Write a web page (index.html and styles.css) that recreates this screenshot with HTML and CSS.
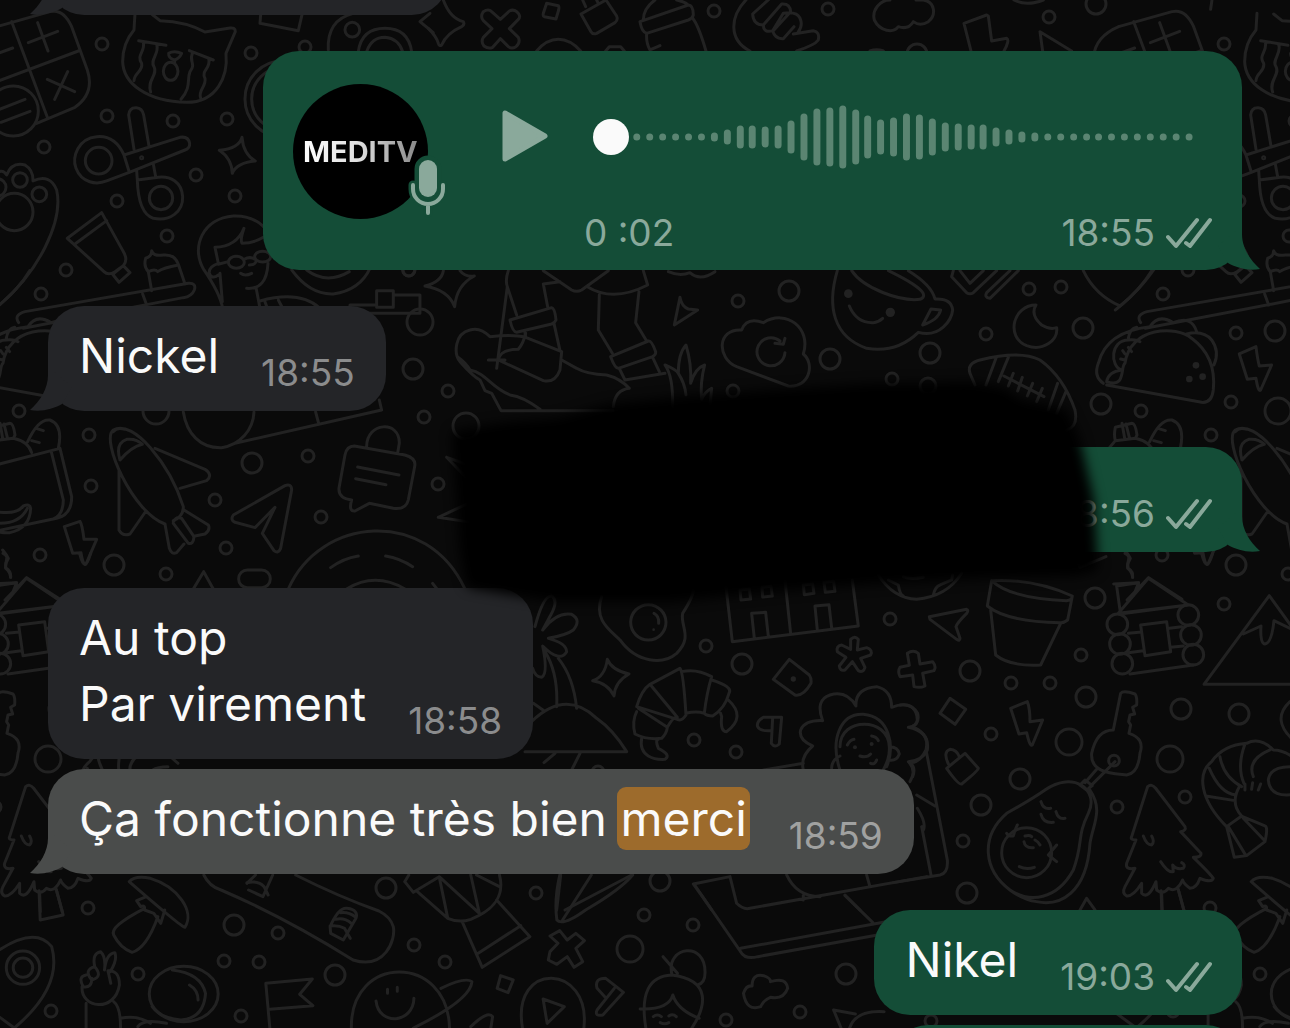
FILE: index.html
```html
<!DOCTYPE html>
<html lang="fr">
<head>
    <meta charset="UTF-8">
    <meta name="viewport" content="width=device-width, initial-scale=1.0">
    <title>Discussion</title>
    <link rel="stylesheet" href="styles.css">
</head>
<body>
    <svg class="wallpaper" viewBox="0 0 1290 1028" preserveAspectRatio="xMinYMin slice" aria-hidden="true">
        <defs>
            <g id="tile">
                <!-- dots -->
                <g id="small-dots">
                    <circle cx="102" cy="44" r="6"/><circle cx="251" cy="53" r="6"/><circle cx="305" cy="47" r="6"/><circle cx="107" cy="116" r="6"/>
                    <circle cx="173" cy="121" r="6"/><circle cx="227" cy="119" r="6"/><circle cx="44" cy="147" r="6"/><circle cx="196" cy="175" r="6"/>
                    <circle cx="117" cy="201" r="6"/><circle cx="235" cy="196" r="6"/><circle cx="167" cy="236" r="6"/><circle cx="66" cy="270" r="6"/>
                    <circle cx="41" cy="294" r="6"/><circle cx="714" cy="11" r="6"/><circle cx="828" cy="9" r="6"/><circle cx="1049" cy="17" r="6"/>
                    <circle cx="409" cy="270" r="6"/><circle cx="448" cy="391" r="6"/><circle cx="424" cy="417" r="6"/><circle cx="438" cy="484" r="6"/>
                    <circle cx="738" cy="301" r="6"/><circle cx="733" cy="391" r="6"/><circle cx="1029" cy="289" r="6"/><circle cx="1061" cy="287" r="6"/>
                    <circle cx="986" cy="334" r="6"/><circle cx="892" cy="379" r="6"/><circle cx="19" cy="411" r="6"/><circle cx="114" cy="333" r="6"/>
                    <circle cx="109" cy="402" r="6"/><circle cx="89" cy="435" r="6"/><circle cx="91" cy="486" r="6"/><circle cx="308" cy="456" r="6"/>
                    <circle cx="215" cy="500" r="6"/><circle cx="321" cy="517" r="6"/><circle cx="226" cy="548" r="6"/><circle cx="166" cy="574" r="6"/>
                    <circle cx="40" cy="555" r="6"/><circle cx="102" cy="604" r="6"/><circle cx="1081" cy="655" r="6"/><circle cx="1011" cy="683" r="6"/>
                    <circle cx="1050" cy="683" r="6"/><circle cx="991" cy="734" r="6"/><circle cx="1117" cy="807" r="6"/><circle cx="63" cy="797" r="6"/>
                    <circle cx="963" cy="841" r="6"/><circle cx="88" cy="908" r="6"/><circle cx="138" cy="974" r="6"/><circle cx="931" cy="1021" r="6"/>
                    <circle cx="706" cy="646" r="6"/><circle cx="890" cy="619" r="6"/><circle cx="694" cy="740" r="6"/><circle cx="736" cy="752" r="6"/>
                    <circle cx="598" cy="772" r="6"/><circle cx="536" cy="893" r="6"/><circle cx="278" cy="933" r="6"/><circle cx="644" cy="915" r="6"/>
                    <circle cx="693" cy="925" r="6"/><circle cx="414" cy="945" r="6"/><circle cx="445" cy="962" r="6"/><circle cx="224" cy="961" r="6"/>
                    <circle cx="259" cy="962" r="6"/><circle cx="51" cy="1011" r="6"/><circle cx="241" cy="1016" r="6"/><circle cx="800" cy="1012" r="6"/>
                    <circle cx="726" cy="1020" r="6"/>
                </g>
                <g id="big-dots">
                    <circle cx="-26" cy="4" r="10"/><circle cx="917" cy="54" r="10"/><circle cx="413" cy="369" r="10"/><circle cx="789" cy="291" r="10"/>
                    <circle cx="830" cy="359" r="10"/><circle cx="1083" cy="328" r="10"/><circle cx="930" cy="353" r="10"/><circle cx="928" cy="386" r="8"/>
                    <circle cx="1101" cy="404" r="10"/><circle cx="153" cy="331" r="10"/><circle cx="252" cy="463" r="10"/><circle cx="114" cy="565" r="10"/>
                    <circle cx="1095" cy="598" r="10"/><circle cx="970" cy="671" r="10"/><circle cx="1086" cy="697" r="10"/><circle cx="59" cy="709" r="10"/>
                    <circle cx="117" cy="714" r="10"/><circle cx="1020" cy="779" r="10"/><circle cx="981" cy="805" r="10"/><circle cx="967" cy="893" r="10"/>
                    <circle cx="742" cy="664" r="10"/><circle cx="660" cy="881" r="10"/><circle cx="234" cy="925" r="10"/><circle cx="386" cy="888" r="10"/>
                    <circle cx="335" cy="975" r="10"/><circle cx="846" cy="974" r="10"/><circle cx="420" cy="322" r="13"/><circle cx="466" cy="426" r="13"/>
                    <circle cx="156" cy="411" r="13"/><circle cx="1069" cy="742" r="13"/><circle cx="48" cy="759" r="13"/><circle cx="630" cy="949" r="13"/>
                </g>

                <!-- calculator, cat, scissors, paw, paint tube, cake, girl -->
                <g transform="scale(.3333)">
                    <path d="M-10 80 150 35Q190 25 215 80L262 210Q285 280 225 322L110 370M-10 80Q-80 110-85 170M35 65 142 352M-10 245 235 153M85 128 173 94M113 68 144 153M142 238 224 275M203 215 164 298M-20 165 38 144"/>
                    <circle cx="40" cy="333" r="75"/><path d="M-15 333 75 298M3 367 90 334"/>
                    <path d="M405 40 402 90Q368 130 368 185C370 250 440 305 560 307C650 307 685 230 678 160L706 95Q706 82 690 84L615 96Q560 65 480 62L455 42"/>
                    <path d="M416 122 498 136M568 152 640 180M430 126C437 155 408 165 425 190C430 215 403 218 402 242M470 134C480 160 448 180 462 200C475 225 440 240 452 276M578 158C565 185 590 190 570 215C560 240 575 260 543 298M626 176C635 205 602 210 615 235C620 260 593 270 602 294"/>
                    <ellipse cx="512" cy="214" rx="22" ry="27"/><path d="M506 160Q522 150 545 160Q538 175 524 180Q505 175 506 160ZM524 180V188"/>
                    <path d="M402 448 386 345Q388 322 409 323Q427 324 431 345L447 438M372 465 540 412Q565 408 569 430Q570 445 555 450L388 517ZM372 465Q345 405 290 410C235 415 215 470 228 505C245 550 290 555 320 543L388 517M410 512 412 540Q415 640 460 655C510 665 550 635 548 590C545 545 510 528 475 532L412 540M460 492 467 530"/>
                    <circle cx="296" cy="482" r="40"/><circle cx="483" cy="594" r="35"/><circle cx="425" cy="473" r="3"/>
                    <path d="M658 451Q718 445 726 412Q730 462 766 483Q710 488 697 520Q695 475 658 451Z"/>
                    <path d="M-20 530Q5 500 20 525Q35 485 75 495Q100 510 99 543Q150 520 170 570C190 660 120 820-20 930"/>
                    <circle cx="-8" cy="562" r="26"/><circle cx="60" cy="540" r="22"/><circle cx="118" cy="583" r="22"/><circle cx="43" cy="636" r="56"/>
                    <path d="M305 638 202 715 312 815Q325 828 345 815L370 797Q385 780 370 755ZM320 662 224 733M338 823 370 797 390 818 357 847Z"/>
                    <path d="M455 872 445 815Q430 800 437 775Q455 770 455 752Q460 770 490 765Q525 762 535 793L555 852M445 815Q465 805 473 815Q490 803 535 795M56 968Q40 945 75 935L565 850Q590 848 583 870Q575 890 550 893L70 985M428 882 440 915"/>
                    <path d="M668 925Q660 880 612 810C570 740 610 655 700 648C770 645 820 690 830 760M655 790 645 742Q710 740 732 685Q720 720 726 730Q760 730 790 712M660 820 667 905M655 790Q625 800 628 820Q635 840 655 825M740 865Q800 870 804 790M768 862 780 925M722 820Q735 830 755 820M748 795Q765 795 768 785M655 793 685 785M733 778Q750 768 765 778"/>
                    <ellipse cx="709" cy="787" rx="24" ry="18"/><ellipse cx="788" cy="770" rx="24" ry="16"/>
                    <path d="M780 903Q900 870 960 925M795 905 802 925M835 900 848 925"/>
                    <path d="M985 150Q980 60 1060 40M1075 155Q1085 85 1155 85Q1225 85 1235 155M1100 155Q1115 112 1155 112Q1195 115 1208 155"/><circle cx="1057" cy="89" r="22"/>
                    <path d="M780 70 895 92 907 40M782 45 780 70M1290 40 1260 65 1300 98"/>
                    <circle cx="850" cy="297" r="115"/><circle cx="850" cy="297" r="95"/>
                    <path d="M875 810Q930 885 1000 882Q1080 870 1110 805M920 810Q980 855 1048 815"/><circle cx="1226" cy="810" r="18"/>
                    <path d="M1130 872H1180V922H1130ZM1130 915H1050V940H1260V885H1180"/>
                </g>

                <!-- top row -->
                <g transform="translate(430) scale(.3333)">
                    <path d="M40 0Q60 55 100 65Q105 75 95 80Q50 100 35 135Q28 140 25 130Q20 110-5 85M160 35Q175 25 185 35L211 58 238 33Q250 27 260 35Q275 48 265 58L238 86 265 112Q272 128 258 140Q245 148 235 140L211 116 188 142Q175 148 162 138Q152 125 160 112L186 86 160 62Q150 50 160 35Z"/>
                    <path d="M350 10 385 17Q388 20 386 30L378 57 343 50Q338 48 340 40ZM458 0 467 20M500 0 505 10M453 42 528 0 560 48Q565 60 555 68L500 100Q488 104 483 95ZM320 153Q350 118 385 118Q420 118 452 153M527 153 538 140H572L583 153"/>
                    <path d="M630 65 775 15Q790 15 790 45Q788 55 775 60L650 100Q635 95 630 65ZM640 60Q640 25 675 0M740 0Q765 5 775 15M650 100Q648 130 660 150L690 137M788 55Q805 75 828 153"/>
                    <path d="M948 0C900 50 895 120 960 153M1020-5 968 42Q970 75 1000 75L1055 12Q1080 10 1082 35L1030 92Q1000 100 1000 75M1060 40Q1110 30 1114 70Q1114 85 1105 95M1060 40 1028 92Q1035 118 1060 116L1092 80M1090 102 1150 92Q1170 95 1165 120Q1155 135 1100 153"/>
                </g>
                <g transform="translate(860) scale(.3333)">
                    <path d="M90 0C60 0 35 30 43 60C60 95 100 100 115 80Q145 90 160 65Q180 80 205 65C230 45 225 5 190 0H168M30 153Q50 145 70 153M462 0Q500 20 550 0M333 153 312 70 380 45 385 48 395 123 440 115Q450 120 432 153M548 153 540 95 635 153M1052 28 1056 0"/>
                </g>

                <!-- walking shoes, grass, cloud -->
                <g transform="translate(380 260) scale(.3333)">
                    <path d="M135 78Q185 65 190 32M240 32Q255 52 283 48Q230 75 224 140Q205 90 135 78M385 32Q375 60 382 80L410 165M382 80 350 325M325 300H375M490 32 575 90Q590 98 605 90L685 32M540 65 490 72 503 140M390 180 515 143Q525 145 528 180Q525 188 515 192L410 217Q398 217 390 180ZM522 190 540 272M435 217 437 232 545 275 540 330Q525 370 490 362L355 300"/>
                    <path d="M437 232Q400 222 330 230Q300 200 270 210C225 220 220 280 240 305Q280 350 300 360L315 392 335 400 363 452H700M232 290Q260 310 270 330C320 340 330 380 390 405Q430 410 480 448M355 300Q360 268 415 268Q430 250 437 220M545 300 590 325Q620 343 680 345Q720 355 748 385Q705 390 700 440M622 80Q700 128 803 75L790 32M658 105 655 210 697 280M777 95 767 188 800 243M692 290 805 243Q815 240 827 275Q828 285 818 290L715 325Q705 325 692 290ZM718 325 735 360 855 340M818 292 838 335"/>
                    <path d="M878 440Q880 350 855 315Q890 330 895 340Q895 280 918 255Q935 310 932 370Q945 325 974 315Q960 370 965 418Q975 395 995 385L990 440M895 340Q915 370 918 405M900 112Q905 140 925 147L953 150 883 195ZM865 35Q900 50 930 38Q960 65 1005 35"/>
                    <path d="M1070 320C1010 295 1010 205 1085 210Q1100 170 1150 188C1220 145 1295 205 1270 282C1305 310 1290 385 1225 378ZM1215 278A42 42 0 1 1 1200 243M1185 250 1210 253 1215 235"/>
                    <path d="M200 592 275 670M200 592 310 630M175 772 265 730M175 772 280 788"/>
                </g>

                <!-- cup, moon, ball, taco -->
                <g transform="translate(820 260) scale(.3333)">
                    <path d="M52 32C20 140 40 230 140 265Q230 280 295 217C360 235 395 180 398 150Q395 115 345 117Q335 75 265 32M95 32C130 85 240 125 300 118Q345 100 205 32M333 147 362 150Q355 180 308 195ZM88 138Q110 190 160 188Q175 187 188 175"/>
                    <circle class="dot" cx="85" cy="101" r="13"/><circle class="dot" cx="211" cy="157" r="14"/>
                    <path d="M400 32 395 50 440 98Q450 105 460 98L530 32M420 32 450 70 490 32M570 32 500 98Q492 112 510 115L595 32M790 32Q825 105 900 138Q960 90 995 32M648 135C580 135 555 230 620 257C670 275 715 240 710 203Q690 210 665 195Q630 165 648 135Z"/>
                    <path d="M450 340Q440 310 480 300C560 280 620 280 660 300Q730 350 765 450Q775 500 740 510M465 375 450 340M528 295 498 375M565 292 535 365M552 348 672 410M580 340 565 378M607 352 593 393M638 370 622 408M667 385 650 425M713 370 685 450M738 395 710 460"/>
                    <path d="M850 370Q820 350 835 310C850 250 900 210 990 200Q1015 160 1060 188Q1115 165 1130 215M860 365C920 385 900 320 915 310C930 200 1070 195 1115 235Q1190 290 1180 390Q1175 430 1145 427L860 375M925 235Q930 205 950 202M1100 222Q1150 210 1175 240Q1200 275 1182 315M905 330C870 320 870 240 925 240Q950 238 960 245M860 365Q865 335 905 330M925 262 935 275M908 272 915 282M902 297 915 300"/>
                    <circle class="dot" cx="1128" cy="316" r="10"/><circle class="dot" cx="1108" cy="357" r="10"/><circle class="dot" cx="1148" cy="350" r="10"/>
                    <path d="M1258 282 1308 260Q1313 300 1318 318L1355 315 1322 390Q1315 398 1308 355L1282 358Z"/>
                    <path d="M915 880C940 890 915 910 925 925Q940 935 938 952M1145 880Q1160 945 1178 880M765 890 780 922 858 890"/>
                    <path d="M175 945Q220 1015 290 1018Q380 1010 425 940M205 960 235 975Q240 1005 250 1008M340 1005Q345 980 360 975L395 960 398 945M250 950Q270 960 310 952"/>
                </g>

                <!-- groceries, rocket, plane, chat bag, plate -->
                <g transform="translate(0 400) scale(.3333)">
                    <path d="M-90 215 180 145 215 290Q215 345 170 355L-20 395M153 152 190 300Q190 345 160 357M83 125Q115 55 150 60Q190 75 175 145M108 85 130 92M95 122 118 128M95 158Q85 125 40 115L45 105Q40 70 30 70L-20 82Q-25 105-20 122L40 115M0 70 8 115M12 72 22 112M-20 122-60 170M-10 335Q50 345 70 318Q90 310 92 325Q90 385 30 398Q5 400-25 390M0 370Q60 370 82 325"/>
                    <path d="M8 450Q20 465 25 475Q15 490 17 505Q30 515 32 532M193 380 240 364Q247 375 252 418L290 418 258 492Q250 500 243 458L218 460ZM15 600 80 533 180 598M-25 552 50 548 35 585"/>
                    <path d="M495 372C400 340 300 120 340 90C400 55 510 195 550 320Q550 350 520 362M340 95Q350 80 375 88M360 180Q345 130 380 118Q410 115 427 133Q395 140 360 180ZM465 145 615 208Q640 225 620 242L540 265M357 210V390Q368 410 390 402L438 333M495 372 508 445Q515 465 530 458L552 432M552 330 625 375Q632 390 615 402L585 408M520 365Q530 348 545 355L582 410Q580 435 565 430L520 370"/>
                    <path d="M700 345 855 257Q875 250 875 270L842 445Q835 462 822 452L787 400 825 322 765 383 705 367Q690 360 700 345ZM1100 140C1100 65 1200 60 1198 130L1193 160M1063 138 1215 165Q1250 175 1244 200L1225 300Q1218 330 1180 325L1108 310 1065 333Q1045 335 1055 300Q1015 295 1017 265L1035 165Q1040 138 1063 138ZM1073 201 1197 225M1067 236 1158 254"/>
                    <path d="M550 36C560 100 600 145 665 143C720 135 760 90 762 36M705 130 1145 30 1138 0M947 36 955 66"/>
                    <path d="M865 567C960 350 1280 320 1395 567M1040 567Q1125 515 1215 567M992 503Q1030 475 1075 468M1157 468Q1200 475 1238 500M1298 550 1315 572M580 567 611 515 640 567"/>
                    <rect x="716" y="510" width="95" height="53" rx="26"/><path d="M735 567H790"/>
                </g>

                <!-- egg, houses, croissant, palm island, portrait -->
                <g transform="translate(530 580) scale(.3333)">
                    <path d="M215 50C190 120 240 150 270 180C320 250 400 255 440 220C490 170 450 140 458 100Q490 50 490 30M372 100Q388 108 386 130"/><circle cx="355" cy="127" r="53"/><circle class="dot" cx="371" cy="149" r="4"/>
                    <path d="M588 20 607 185 985 138 967 0M765 0 782 160M673 175 665 100 707 97 715 168M862 150 855 78 897 74 905 143"/>
                    <path d="M630 30 658 27 662 57 633 60ZM696 22 723 19 727 48 698 51ZM820 15 848 12 852 40 823 44ZM882 7 911 4 915 34 886 37Z"/>
                    <path d="M15 140Q40 45 65 48Q85 60 65 100L38 150Q80 95 125 103Q155 120 130 150Q110 165 55 175Q110 190 110 215Q90 250 38 198Q55 280 35 292Q15 290 8 265M45 215Q85 280 80 380M85 235Q130 290 140 385M-10 440Q100 320 200 415Q250 450 290 515H-15M10 370 42 392M42 548 75 520M125 570 150 520M188 302Q225 290 232 238Q245 270 297 282Q255 305 252 348Q235 310 188 302Z"/>
                    <path d="M360 313 450 265Q460 275 468 405Q455 425 442 418L320 380Q335 330 360 313ZM360 313 442 412M455 275Q500 265 545 290Q530 340 523 400Q500 392 468 400M545 300Q610 320 597 340Q585 385 548 408Q530 408 523 400M325 385 412 442Q430 410 440 412M320 395Q305 425 315 462Q350 480 395 475Q410 460 412 442M335 475C325 530 375 540 405 538Q425 525 385 505 375 480 385 478M595 360Q650 410 590 455Q570 455 575 410L572 400"/>
                    <path d="M755 412H700Q678 425 683 440Q690 455 726 452M728 415 724 490Q735 505 748 492L755 412M778 238 730 298 795 345Q820 350 843 310Q845 295 838 285Z"/><circle class="dot" cx="790" cy="297" r="8"/>
                    <path d="M962 178Q975 165 985 178L982 210 1010 203Q1030 210 1022 225L992 235 1005 262Q1000 280 985 272L967 245 945 270Q930 275 928 258L948 232 922 215Q918 198 935 195L962 208Z"/>
                    <path d="M820 570Q810 530 848 498Q805 480 812 450Q825 420 878 422Q855 360 900 345Q950 330 978 378Q975 325 1040 320Q1085 330 1085 382Q1140 360 1163 400Q1170 430 1145 440Q1200 460 1188 510Q1170 550 1138 548Q1160 575 1140 605M930 570C900 480 930 400 1000 403C1080 410 1095 500 1070 560M930 500C930 410 1075 410 1078 500C1080 530 1070 550 1060 570M930 528Q905 540 905 565M1078 500Q1105 500 1108 522Q1100 545 1075 540M952 495Q960 480 972 478M1025 468Q1040 470 1045 482M990 528Q1010 535 1022 522M1022 550Q1035 555 1040 540M690 572 820 550"/>
                    <circle class="dot" cx="975" cy="502" r="6"/><circle class="dot" cx="1025" cy="492" r="6"/>
                    <path d="M80 990 92 885M105 990 305 885M545 990 490 912 600 890 620 970Q640 990 660 985L1190 890M770 885Q800 950 870 950M1010 885 1020 920M820 945V960M945 945 990 990"/>
                </g>

                <!-- pot, cabin, mountain, avocado, tree, shrimp, mushroom -->
                <g transform="translate(900 560) scale(.3333)">
                    <path d="M275 62Q400 55 517 108L503 180Q490 190 480 188Q320 185 262 138ZM275 62Q330 115 500 122Q517 120 517 108M272 150 287 285Q330 320 422 315L482 190M88 170 200 148Q207 150 200 160Q170 190 168 200L180 235Q180 245 170 238L90 178Z"/>
                    <path d="M655 160 745 55 865 135ZM660 150 650 78 715 68 718 82M660 162 865 135M690 342 880 315M685 220 725 216M685 278 730 272M808 205 845 200M812 262 850 258M722 195 800 185 812 275 735 287Z"/>
                    <circle cx="652" cy="193" r="31"/><circle cx="660" cy="252" r="31"/><circle cx="667" cy="311" r="31"/><circle cx="865" cy="165" r="31"/><circle cx="873" cy="225" r="31"/><circle cx="880" cy="284" r="31"/>
                    <path d="M912 373 1108 107 1300 373ZM1030 222 1083 198Q1080 250 1095 252Q1115 250 1122 182L1180 210"/>
                    <path d="M22 280Q40 268 55 280L60 312 98 305Q110 320 102 332L68 340 75 378Q60 385 42 380L38 345 0 350Q-8 335 0 322L28 316ZM150 415 197 448 165 493 120 460ZM332 445 382 425Q390 445 390 485L428 480 397 555Q390 562 380 518L357 522ZM140 625 195 580 235 625Q235 632 185 672Q175 675 140 625ZM145 612Q128 575 150 568Q170 570 177 588"/>
                    <path d="M640 510 662 400Q670 390 705 402Q712 410 710 435L698 442 704 462 690 465 686 485 692 495 687 520Q735 535 720 580Q715 640 680 645C640 640 570 640 575 580Q590 510 640 510ZM590 628 555 668M645 605 570 680M540 675 555 660 577 677 560 690Z"/><circle cx="642" cy="602" r="16"/>
                    <path d="M435 690C520 630 600 690 565 760C530 830 550 850 520 930C470 1020 390 1030 330 990C250 930 240 830 320 760Q400 715 435 690ZM570 690C610 750 580 790 570 850C560 1000 480 1040 410 1025Q370 1020 330 990M423 725Q430 750 452 745M423 763Q430 790 460 787M468 755Q475 780 495 775M320 820Q325 830 340 828 345 810 352 795M372 845Q375 865 400 863M375 828Q390 825 395 830M405 840Q415 845 420 855M358 920Q380 930 403 922M445 885 470 855M445 885 470 905"/><circle cx="380" cy="878" r="75"/>
                    <path d="M743 680Q755 670 767 685L855 800Q860 812 842 815L903 880Q905 892 880 892Q930 940 940 955Q935 970 900 955Q890 985 870 985Q850 970 848 960Q830 1000 805 985Q790 1005 770 990L768 965Q745 1020 725 1000L725 970Q700 1010 680 1008Q665 1000 675 980L705 925Q675 930 680 910L708 840Q690 840 695 830ZM730 828Q740 855 755 855Q765 845 755 828M782 905Q805 940 820 935L818 915Q830 930 850 925Q858 915 845 908M785 1000 787 1055M835 990 853 1055"/>
                    <path d="M980 800C900 720 890 640 935 605Q970 555 1040 550Q1080 530 1120 570Q1160 570 1200 610M1200 700Q1110 720 1105 660Q1110 620 1170 620M980 800 1025 768Q990 730 1018 680M918 708 1005 722M928 625Q960 700 1008 705M960 590Q970 650 1025 680M1035 552Q1010 620 1032 670M1110 570Q1040 600 1060 650M980 800 1003 892 1040 887 1095 845Q1105 800 1095 798L1028 770M1030 775 1090 838M985 800 1038 887M1035 690 1035 672M1055 688 1058 668M1075 690 1082 672M1170 425Q1110 480 1185 545"/>
                    <path d="M540 1050 560 1015 585 1050M80 580 142 900Q145 940 120 945L-20 968M65 800 93 945M50 705 105 738M52 745Q80 790 70 810"/>
                    <path d="M0 435Q50 430 52 480Q50 500 25 502Q90 515 82 570Q70 600 25 605Q50 620 38 650"/>
                </g>

                <!-- bottom row -->
                <g transform="translate(0 860) scale(.5741 .3333)">
                    <path d="M68 92 70 180 110 165 98 88M225 65Q235 45 262 55C310 80 340 155 322 202Q315 200 225 65ZM255 110 238 122 245 140Q252 135 252 145Q190 200 198 225Q210 265 230 277Q255 265 275 170M252 150 268 160 280 190 287 150"/>
                    <path d="M-10 280Q60 195 90 260Q110 380 25 504L-10 460"/><ellipse cx="40" cy="323" rx="17" ry="29"/><ellipse cx="40" cy="323" rx="29" ry="50"/>
                    <path d="M150 504V430M210 504Q210 440 198 425M143 380C140 445 200 460 208 375Q208 330 188 332L193 370M165 320Q160 280 175 275 185 290 182 330Q185 280 200 278 205 300 192 335M150 345Q135 350 145 380 160 385 160 355M165 320Q145 330 160 360 180 350 165 320M210 475Q240 465 262 490"/>
                    <ellipse cx="320" cy="402" rx="60" ry="83"/><path d="M300 330Q350 340 358 400Q355 475 315 480Q280 475 265 440M330 375Q345 390 345 420M240 500Q250 475 290 490"/>
                    <path d="M355 45Q365 80 385 90C480 160 550 230 615 300C670 330 690 240 685 200Q680 170 660 153Q590 110 515 45M575 200Q590 140 605 145Q625 150 620 175L598 240 576 220ZM575 198Q590 195 600 205L610 235M585 178Q600 172 612 190M593 158Q608 155 618 170M430 70 445 45M475 45 458 110 433 90M430 68Q450 60 460 80L467 105"/>
                    <path d="M725 92 780 175Q800 190 820 178C860 150 880 110 870 45M705 65 720 97 765 50 835 160M705 65 712 45M820 45 835 160M765 50 780 175M805 185 840 322 923 230 865 120M833 280 907 197M830 45 870 80M975 45Q965 120 970 180 980 200 1020 150Q1080 90 1102 45M980 180 1030 45"/>
                    <path d="M470 504 463 370 544 357 522 403 545 437 470 448M612 504C610 280 780 280 783 504M655 423C660 500 720 490 721 415M675 388V400M692 382V394M768 385Q810 350 822 365Q820 420 720 504M872 347 894 360 885 398 866 385ZM820 500Q850 450 858 470L855 504M910 504C890 300 1030 310 1017 504M946 417 983 440 953 490Z"/>
                    <path d="M1040 385Q1035 355 1055 355L1086 397 1050 465Q1035 470 1040 450L1070 385M1040 385 1055 413M958 275 972 250 958 228 975 212 988 240 1003 220 1018 242 1003 265 1015 305 1000 322 988 290 970 313 955 300ZM1170 340C1160 260 1230 240 1228 340Q1228 370 1215 375M1155 290 1180 340M1125 504Q1110 350 1170 345C1240 360 1230 440 1205 504M1115 447Q1165 450 1172 405Q1180 450 1218 475M1138 470Q1145 460 1152 470M1165 468Q1172 460 1178 470M1150 488Q1158 495 1165 488M1295 400Q1300 375 1310 378Q1310 340 1330 347 1343 355 1342 365Q1370 350 1372 385 1365 420 1342 412Q1330 420 1325 440 1300 455 1295 400M1465 504 1452 450 1490 462M1480 504Q1490 450 1540 455"/>
                    <path d="M1290 265 1560 180M1210 75 1290 275Q1298 300 1320 290L1560 215M1472 107 1520 187"/>
                </g>
            </g>
        </defs>
        <use href="#tile" x="-1122"/>
        <use href="#tile"/>
        <use href="#tile" x="1122"/>
    </svg>

    <svg class="symbols" aria-hidden="true">
        <symbol id="tail" viewBox="0 0 60 44">
            <path d="M42 0v8c0 14 8 26 18 35-12 2-23-1-32-6L18 20z"/>
        </symbol>
        <symbol id="checks" viewBox="0 0 46 32">
            <path d="M2 20 10 29 31 3M20 26 24 29 44 3"/>
        </symbol>
    </svg>

    <main class="chat">
        <div class="message in first">
            <svg class="tail"><use href="#tail"/></svg>
        </div>

        <div class="message out voice">
            <div class="avatar">
                <span class="brand">MEDITV</span>
                <svg class="mic" viewBox="0 0 42 64">
                    <g class="mic-edge"><rect x="12" y="5" width="18" height="37" rx="9"/><path d="M6 30v4a15 15 0 0 0 30 0v-4M21 49v9"/></g>
                    <rect class="mic-body" x="12" y="5" width="18" height="37" rx="9"/>
                    <path class="mic-stand" d="M6 30v4a15 15 0 0 0 30 0v-4M21 49v9"/>
                </svg>
            </div>
            <button class="play" aria-label="Lire">
                <svg viewBox="0 0 46 52"><path d="M3 3v46l40-23z"/></svg>
            </button>
            <div class="player">
                <svg class="wave" viewBox="0 0 604 64" preserveAspectRatio="none">
                    <path d="M44 32v.1M57 32v.1M70 32v.1M83 32v.1M96 32v.1M109 32v.1M122 31v2M135 28v8M148 24v16M160 24v16M173 25v14M186 24v16M199 19v26M212 12v40M225 7v50M238 6v52M251 4v56M264 8v48M276 14v36M289 18v28M302 16v32M315 12v40M328 13v38M341 17v30M354 21v22M367 22v20M380 23v18M392 23v18M405 26v12M418 28v8M431 30v4M444 31v2M457 32v.1M470 32v.1M483 32v.1M496 32v.1M508 32v.1M521 32v.1M534 32v.1M547 32v.1M560 32v.1M573 32v.1M586 32v.1M599 32v.1"/>
                </svg>
                <input class="seek" type="range" min="0" max="2" value="0" step="1" aria-label="Position">
            </div>
            <span class="duration">0 :02</span>
            <span class="meta">18:55 <svg class="checks"><use href="#checks"/></svg></span>
            <svg class="tail"><use href="#tail"/></svg>
        </div>

        <div class="message in">
            <p class="text">Nickel</p>
            <span class="meta">18:55</span>
            <svg class="tail"><use href="#tail"/></svg>
        </div>

        <div class="message out hidden-text">
            <span class="meta">18:56 <svg class="checks"><use href="#checks"/></svg></span>
            <svg class="tail"><use href="#tail"/></svg>
            <svg class="scribble" viewBox="0 0 700 260">
                <path d="M28 66 80 58 130 54 180 40 260 32 340 26 440 20 540 18 572 24 590 36 632 44 644 70 658 130 662 196 645 200 560 202 440 208 340 216 240 226 130 226 90 220 42 212 36 180Z"/>
            </svg>
        </div>

        <div class="message in">
            <p class="text">Au top<br>Par virement</p>
            <span class="meta">18:58</span>
        </div>

        <div class="message in selected follow">
            <p class="text">Ça fonctionne très bien <mark>merci</mark></p>
            <span class="meta">18:59</span>
            <svg class="tail"><use href="#tail"/></svg>
        </div>

        <div class="message out">
            <p class="text">Nikel</p>
            <span class="meta">19:03 <svg class="checks"><use href="#checks"/></svg></span>
        </div>

        <div class="message out follow last"></div>
    </main>
</body>
</html>
```
FILE: styles.css
```css
* {
    box-sizing: border-box;
}
body {
    margin: 0;
    height: 100vh;
    overflow: hidden;
    background-color: #0a0a0a;
    color: #fafafa;
    font-family: Inter, "Liberation Sans", sans-serif;
}
.wallpaper {
    position: absolute;
    top: 0;
    left: 0;
    width: 100%;
    height: 100%;
    fill: none;
    stroke: #222;
    stroke-linecap: round;
    stroke-linejoin: round;
}
.wallpaper path,
.wallpaper circle,
.wallpaper ellipse,
.wallpaper rect {
    stroke-width: 3px;
    vector-effect: non-scaling-stroke;
}
.wallpaper .dot {
    fill: #222;
    stroke: none;
}
.symbols {
    display: none;
}
.chat {
    position: relative;
    display: flex;
    flex-direction: column;
    height: 100vh;
    overflow: hidden;
    padding: 0 48px;
}
.message {
    position: relative;
    display: flex;
    flex-shrink: 0;
    align-items: flex-end;
    gap: 42px;
    min-height: 105px;
    margin-top: 36px;
    padding: 17px 31px 22px;
    border-radius: 36px;
}
.in {
    align-self: flex-start;
    background-color: #242528;
    fill: #242528;
}
.out {
    align-self: flex-end;
    padding-right: 30px;
    background-color: #144d37;
    fill: #144d37;
}
.selected {
    background-color: #4a4c4b;
    fill: #4a4c4b;
}
.follow {
    margin-top: 10px;
}
.first {
    width: 400px;
    margin-top: -90px;
}
.last {
    width: 350px;
}
.text {
    margin: 0;
    font-size: 48px;
    line-height: 66px;
}
mark {
    margin: 0 -3px;
    padding: 2px 3px;
    border-radius: 9px;
    background-color: #9d6b2c;
    color: #fafafa;
}
.meta {
    display: flex;
    align-items: center;
    gap: 11px;
    color: #8b8c8d;
    font-size: 37px;
    line-height: 32px;
}
.out .meta {
    color: #8aa99b;
}
.selected .meta {
    color: #a0a1a0;
}
.checks {
    width: 46px;
    height: 32px;
    fill: none;
    stroke: #8aa99b;
    stroke-width: 4px;
    stroke-linecap: round;
    stroke-linejoin: round;
}
.tail {
    position: absolute;
    right: -18px;
    bottom: 0;
    width: 60px;
    height: 44px;
}
.in .tail {
    right: auto;
    left: -18px;
    transform: scaleX(-1);
}

/* voice message */
.voice {
    display: grid;
    grid-template-columns: 209px 91px 1fr auto;
    grid-template-rows: 135px 32px;
    gap: 0;
    width: 82%;
    padding: 33px 30px 19px;
}
.avatar {
    position: relative;
    display: flex;
    align-items: center;
    justify-content: center;
    width: 135px;
    height: 135px;
    border-radius: 50%;
    background-color: #000;
}
.brand {
    font-size: 29px;
    font-weight: 700;
    background: linear-gradient(90deg, #fff, #ddd 50%, #888);
    background-clip: text;
    color: transparent;
}
.mic {
    position: absolute;
    right: -21px;
    bottom: 0;
    width: 42px;
    height: 64px;
    fill: none;
    stroke-linecap: round;
}
.mic-edge {
    fill: #144d37;
    stroke: #144d37;
    stroke-width: 9px;
}
.mic-edge path {
    fill: none;
}
.mic-body {
    fill: #8aa99b;
}
.mic-stand {
    stroke: #8aa99b;
    stroke-width: 4px;
}
.play {
    align-self: start;
    width: 46px;
    height: 52px;
    margin-top: 26px;
    padding: 0;
    border: none;
    background: none;
    cursor: pointer;
}
.play svg {
    display: block;
    width: 46px;
    height: 52px;
    fill: #8aa99b;
    stroke: #8aa99b;
    stroke-width: 5px;
    stroke-linejoin: round;
}
.player {
    display: grid;
    grid-column: 3 / 5;
    align-self: start;
    height: 64px;
    margin: 21px 18px 0 0;
}
.wave,
.seek {
    grid-area: 1 / 1;
    width: 100%;
    height: 64px;
    margin: 0;
}
.wave {
    fill: none;
    stroke: #5b8572;
    stroke-width: 7px;
    stroke-linecap: round;
}
.seek {
    appearance: none;
    background: none;
    cursor: pointer;
}
.seek::-webkit-slider-thumb {
    appearance: none;
    width: 36px;
    height: 36px;
    border-radius: 50%;
    background-color: #fafafa;
}
.duration {
    grid-column: 3;
    margin-left: -9px;
    color: #8aa99b;
    font-size: 37px;
    line-height: 36px;
}
.voice .meta {
    grid-column: 4;
    padding-bottom: 2px;
}

/* message covered by a brush stroke */
.hidden-text {
    justify-content: flex-end;
    width: 60%;
}
.scribble {
    position: absolute;
    z-index: 1;
    right: 112px;
    bottom: -78px;
    width: 700px;
    height: 260px;
    overflow: visible;
    fill: #000;
    stroke: #000;
    stroke-width: 12px;
    stroke-linejoin: round;
    filter: blur(6px);
}
```
